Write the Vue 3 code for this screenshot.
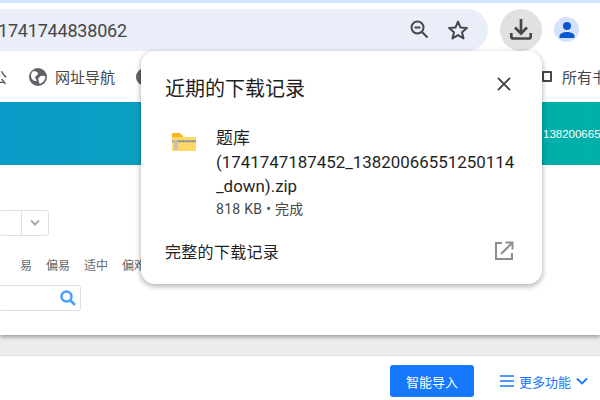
<script setup>
const levels = ["易", "偏易", "适中", "偏难"];
</script>

<template>
  <div class="screen">
    <div class="toolbar">
      <div class="omnibox">
        <span class="url">1741744838062</span>
        <svg class="zoom-out" width="24" height="24" viewBox="0 0 24 24" fill="none" stroke="#474747" stroke-width="2">
          <circle cx="9.500" cy="9.500" r="6" />
          <path d="M6.500 9.500h6M14 14l5.500 5.500" />
        </svg>
        <svg class="star" width="24" height="24" viewBox="0 0 24 24" fill="none" stroke="#474747" stroke-width="2" stroke-linejoin="round">
          <path d="M12 3.600l2.500 5.900 6.400.5-4.900 4.200 1.500 6.200L12 17.100l-5.500 3.300 1.500-6.200-4.900-4.200 6.400-.5z" />
        </svg>
      </div>
      <div class="download-btn">
        <svg width="24" height="24" viewBox="0 0 24 24" fill="none" stroke="#474747" stroke-width="2.700">
          <path d="M12 1v14M6 9.500l6 6 6-6" />
          <path d="M2.300 15v3.500c0 1.200.8 2 2 2h15.400c1.200 0 2-.8 2-2V15" />
        </svg>
      </div>
      <div class="avatar">
        <svg width="18" height="18" viewBox="0 0 18 18" fill="#0b57d0">
          <circle cx="9" cy="5" r="4" />
          <path d="M1.500 17v-2c0-2.600 4.500-4 7.500-4s7.500 1.400 7.500 4v2z" />
        </svg>
      </div>
    </div>

    <div class="bookmarks">
      <span class="bm-cut">公</span>
      <svg class="globe" width="18" height="18" viewBox="0 0 18 18">
        <circle cx="9" cy="9" r="9" fill="#5f6368" />
        <path d="M3.500 3.500c2-.5 4.500 0 5.500 1.500s-1.500 2-2.500 3.500S7 11 8 12.500c-2 1-3.500.5-5-1.500S1.500 6 3.500 3.500zM10.500 9c1.500-1.500 4-1.500 6-.5-.2 3-2 6-5.500 7.500-1-1-1-2-1.500-3.500s0-2.500 1-3.500z" fill="#fff" />
      </svg>
      <span class="bm-text">网址导航</span>
      <span class="globe-two"></span>
      <span class="all-bm">
        <span class="folder-box"></span>
        所有书签
      </span>
    </div>

    <div class="banner">
      <span class="banner-text">13820066551250114</span>
    </div>

    <div class="page">
      <div class="select-box">
        <span class="select-arrow">
          <svg width="12" height="8" viewBox="0 0 12 8" fill="none" stroke="#aaa" stroke-width="2"><path d="M2 1.500l4 4 4-4" /></svg>
        </span>
      </div>
      <div class="levels">
        <span v-for="l in levels" :key="l">{{ l }}</span>
      </div>
      <div class="search-box">
        <svg width="18" height="18" viewBox="0 0 18 18" fill="none" stroke="#4a9eff" stroke-width="2.500">
          <circle cx="7.500" cy="7.500" r="5" />
          <path d="M11.500 11.500 16 16" />
        </svg>
      </div>
    </div>

    <div class="gap-strip"></div>

    <div class="footer">
      <button class="import-btn">智能导入</button>
      <span class="more">
        <svg width="14" height="12" viewBox="0 0 14 12" fill="none" stroke="#1677ff" stroke-width="1.500"><path d="M0 1h14M0 6h14M0 11h14" /></svg>
        更多功能
        <svg width="12" height="8" viewBox="0 0 12 8" fill="none" stroke="#1677ff" stroke-width="1.800"><path d="M1 1.500l5 5 5-5" /></svg>
      </span>
    </div>

    <div class="popup">
      <div class="popup-head">
        <span class="popup-title">近期的下载记录</span>
        <svg class="close" width="14" height="14" viewBox="0 0 14 14" fill="none" stroke="#474747" stroke-width="1.800"><path d="M1 1l12 12M13 1 1 13" /></svg>
      </div>
      <div class="item">
        <svg class="zip" width="24" height="20" viewBox="0 0 24 20">
          <path d="M0 2q0-1 1-1h7l3 3v3H0z" fill="#f5b81f" />
          <path d="M0 5h23a1 1 0 0 1 1 1v12a1 1 0 0 1-1 1H1a1 1 0 0 1-1-1z" fill="#ffd766" />
          <rect x="0" y="8" width="24" height="2.500" fill="#b5b1a2" />
          <path d="M5 9.200h19" stroke="#6f6c60" stroke-width="1" stroke-dasharray="1.500 1.500" />
          <rect x="2" y="8" width="3.500" height="10" fill="#c3c0b4" />
        </svg>
        <div class="item-text">
          <div class="file-name">题库<br />(1741747187452_13820066551250114<br />_down).zip</div>
          <div class="file-meta">818 KB • 完成</div>
        </div>
      </div>
      <div class="popup-foot">
        <span>完整的下载记录</span>
        <svg width="20" height="20" viewBox="0 0 20 20" fill="none" stroke="#8a8d91" stroke-width="2">
          <path d="M8 2H2v16h16v-6" />
          <path d="M7 13 18 2M11.500 1.500h7v7" />
        </svg>
      </div>
    </div>
  </div>
</template>

<style scoped>
.screen {
  position: relative;
  width: 600px;
  height: 400px;
  overflow: hidden;
  display: flex;
  flex-direction: column;
  background: #fff;
  font-family: "Noto Sans CJK SC", "Liberation Sans", sans-serif;
  color: #1f1f1f;
}

.toolbar {
  height: 51px;
  flex: none;
  box-sizing: border-box;
  border-top: 3px solid #d3e3fd;
  padding-top: 6px;
  display: flex;
  align-items: flex-start;
}

.omnibox {
  width: 488px;
  height: 42px;
  flex: none;
  background: #e9eef8;
  border-radius: 0 21px 21px 0;
  display: flex;
  align-items: center;
}

.url {
  margin-left: -2px;
  margin-right: auto;
  font-family: "Roboto", "Liberation Sans", sans-serif;
  font-size: 18px;
  color: #474747;
  letter-spacing: -0.2px;
}

.zoom-out {
  margin-right: 14px;
}

.star {
  margin-right: 18px;
}

.download-btn {
  width: 42px;
  height: 42px;
  margin-left: 12px;
  border-radius: 50%;
  background: #e1e1e1;
  display: flex;
  align-items: center;
  justify-content: center;
}

.avatar {
  width: 25px;
  height: 25px;
  margin: 8px 0 0 12px;
  border-radius: 50%;
  background: #d3e3fd;
  display: flex;
  align-items: center;
  justify-content: center;
}

.bookmarks {
  height: 51px;
  flex: none;
  display: flex;
  align-items: center;
  font-size: 15px;
  color: #474747;
}

.bm-cut {
  margin-left: -8px;
  width: 37px;
  flex: none;
}

.globe {
  flex: none;
}

.bm-text {
  margin-left: 8px;
  white-space: nowrap;
}

.globe-two {
  width: 18px;
  height: 18px;
  margin-left: 21px;
  flex: none;
  border-radius: 50%;
  background: #5f6368;
}

.all-bm {
  margin-left: auto;
  margin-right: -22px;
  display: flex;
  align-items: center;
  gap: 10px;
  white-space: nowrap;
}

.folder-box {
  width: 10px;
  height: 11px;
  box-sizing: border-box;
  border: 2px solid #474747;
  border-radius: 1px;
}

.banner {
  height: 63px;
  flex: none;
  box-sizing: border-box;
  padding-left: 543px;
  background: linear-gradient(90deg, #0b9bc8, #00b0a8);
  display: flex;
  align-items: center;
  overflow: hidden;
}

.banner-text {
  color: #fff;
  font-family: "Liberation Sans", sans-serif;
  font-size: 11.500px;
  white-space: nowrap;
}

.page {
  flex: 1;
  box-shadow: 0 2px 4px rgba(0, 0, 0, 0.35);
  position: relative;
  padding-top: 45px;
}

.select-box {
  width: 50px;
  height: 26px;
  margin-left: -1px;
  box-sizing: border-box;
  border: 1px solid #dcdfe6;
  border-radius: 3px;
  display: flex;
  justify-content: flex-end;
}

.select-arrow {
  width: 26px;
  border-left: 1px solid #dcdfe6;
  display: flex;
  align-items: center;
  justify-content: center;
}

.levels {
  margin-top: 20px;
  padding-left: 20px;
  height: 18px;
  display: flex;
  gap: 14px;
  font-size: 12px;
  color: #666;
  white-space: nowrap;
}

.search-box {
  width: 82px;
  height: 26px;
  margin: 11px 0 0 -1px;
  box-sizing: border-box;
  border: 1px solid #dcdfe6;
  border-radius: 3px;
  display: flex;
  align-items: center;
  justify-content: flex-end;
  padding-right: 3px;
}

.gap-strip {
  height: 20px;
  flex: none;
  background: #ececec;
  border-bottom: 1px solid #e2e2e2;
}

.footer {
  height: 44px;
  flex: none;
  box-sizing: border-box;
  padding-top: 9px;
  display: flex;
  align-items: flex-start;
}

.import-btn {
  width: 84px;
  height: 32px;
  margin-left: 390px;
  border: 0;
  border-radius: 3px;
  background: #1677ff;
  color: #fff;
  font: inherit;
  font-size: 13px;
}

.more {
  margin-left: 26px;
  height: 32px;
  display: flex;
  align-items: center;
  gap: 5px;
  font-size: 13px;
  color: #1677ff;
  white-space: nowrap;
}

.popup {
  position: absolute;
  left: 141px;
  top: 51px;
  width: 401px;
  height: 233px;
  box-sizing: border-box;
  padding: 0 24px;
  background: #fff;
  border-radius: 14px;
  box-shadow: 0 2px 5px 1px rgba(0, 0, 0, 0.26);
}

.popup-head {
  height: 68px;
  display: flex;
  align-items: flex-start;
  justify-content: space-between;
  padding: 23px 7px 0 0;
  box-sizing: border-box;
}

.popup-title {
  font-size: 20px;
  line-height: 28px;
}

.close {
  margin-top: 3px;
}

.item {
  display: flex;
  gap: 20px;
  padding-left: 7px;
}

.zip {
  margin-top: 13px;
  flex: none;
}

.item-text {
  margin-top: 7px;
}

.file-name {
  font-family: "Roboto", "Noto Sans CJK SC", sans-serif;
  font-size: 16.900px;
  line-height: 24px;
  white-space: nowrap;
}

.file-meta {
  margin-top: 1px;
  font-family: "Roboto", "Noto Sans CJK SC", sans-serif;
  font-size: 14px;
  line-height: 20px;
  letter-spacing: 0.3px;
  color: #474747;
}

.popup-foot {
  margin-top: 20px;
  display: flex;
  align-items: center;
  justify-content: space-between;
  font-size: 16px;
  letter-spacing: 0.3px;
  color: #1f1f1f;
  padding-right: 4px;
}
</style>
